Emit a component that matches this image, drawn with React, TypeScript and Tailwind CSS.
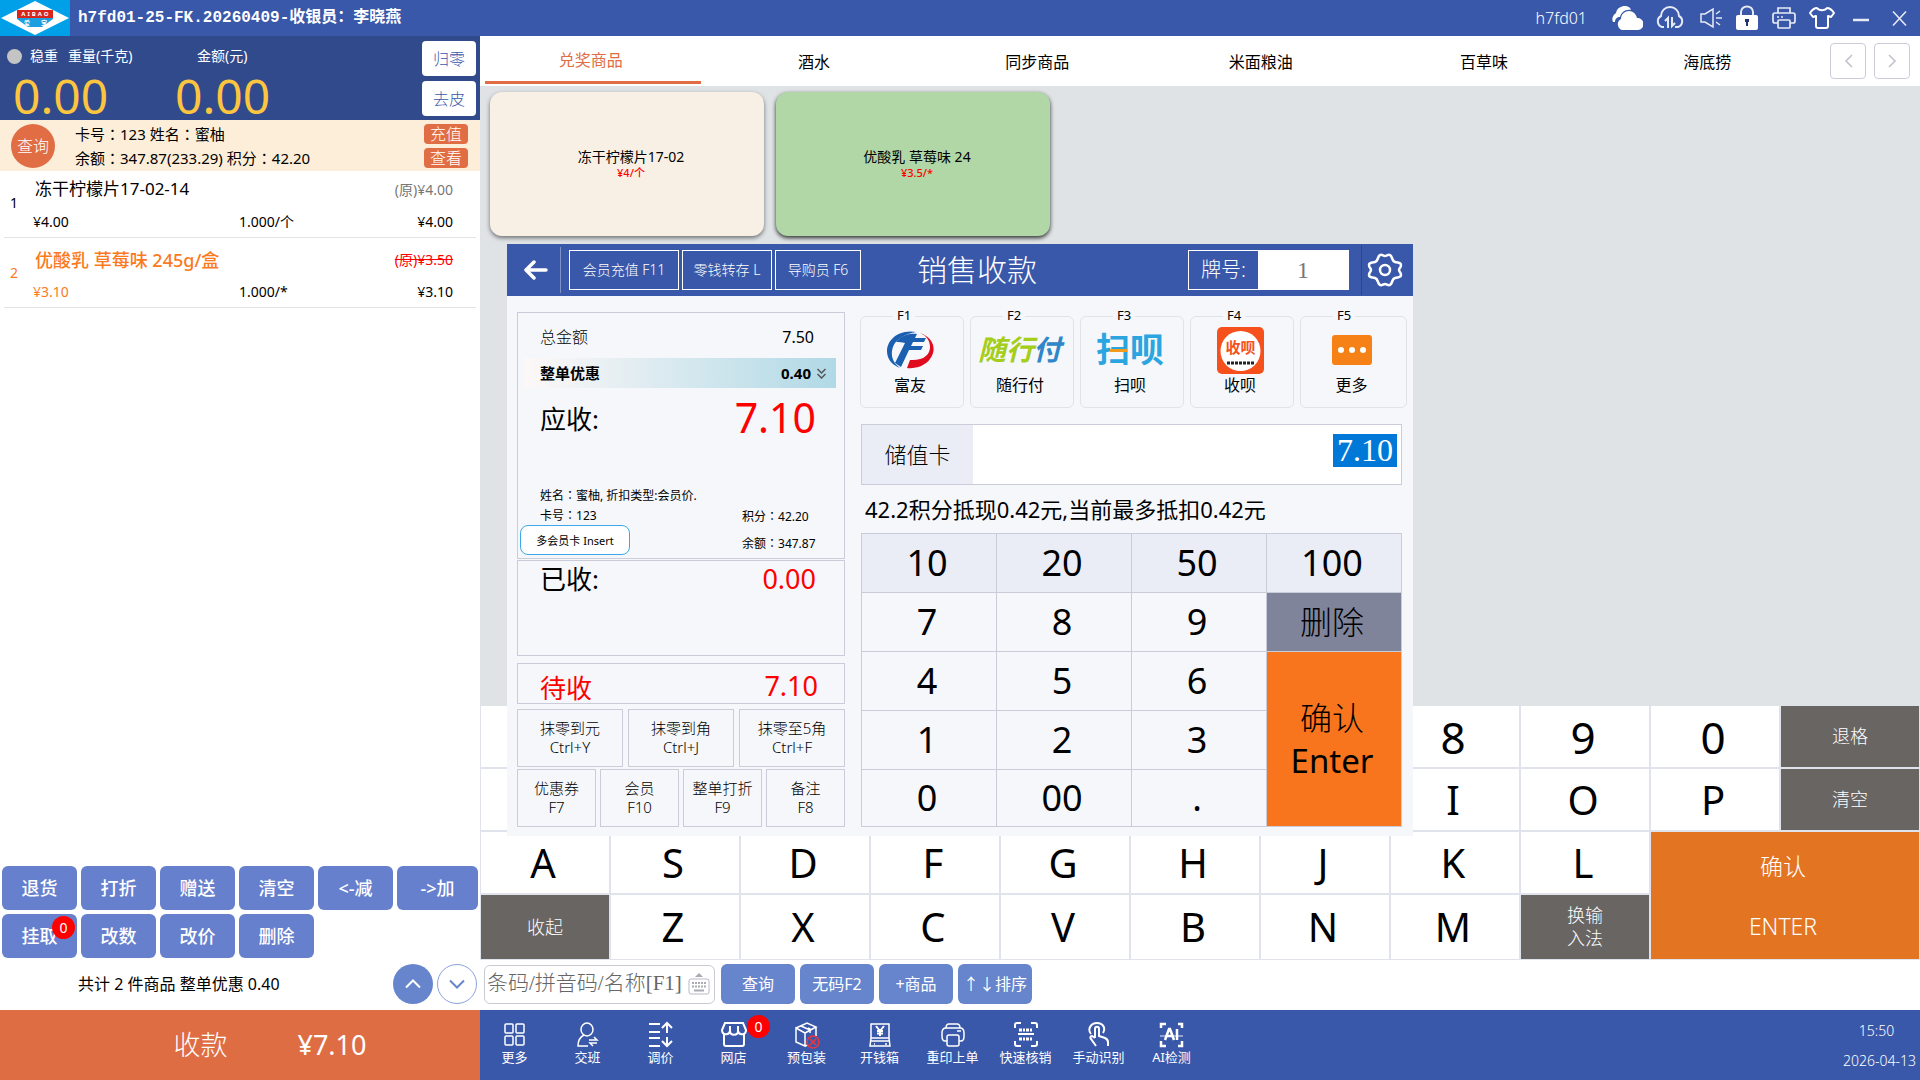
import React from 'react';

interface CartItem {
    id: number;
    name: string;
    price: string;
    original: string;
    qty: string;
    total: string;
    active?: boolean;
}

const cart: CartItem[] = [
    { id: 1, name: '冻干柠檬片17-02-14', price: '¥4.00', original: '(原)¥4.00', qty: '1.000/个', total: '¥4.00' },
    { id: 2, name: '优酸乳 草莓味 245g/盒', price: '¥3.10', original: '(原)¥3.50', qty: '1.000/*', total: '¥3.10', active: true },
];

const tabs = ['兑奖商品', '酒水', '同步商品', '米面粮油', '百草味', '海底捞'];

const keyRows = [
    ['1', '2', '3', '4', '5', '6', '7', '8', '9', '0'],
    ['Q', 'W', 'E', 'R', 'T', 'Y', 'U', 'I', 'O', 'P'],
    ['A', 'S', 'D', 'F', 'G', 'H', 'J', 'K', 'L'],
    ['Z', 'X', 'C', 'V', 'B', 'N', 'M'],
];

// keys that lie under the checkout dialog while it is open
const coveredKeys = '1234567QWERTYU';

// full-width colon, centred in its cell
const Colon = () => <span className="font-['Noto_Sans_CJK_TC',sans-serif]">：</span>;

/* ---------- title bar ---------- */

const Logo = () => (
    <svg width="70" height="36" viewBox="0 0 70 36" className="shrink-0">
        <rect width="70" height="36" fill="#00a0e9" />
        <path d="M1 18 35 1l34 17-34 17z" fill="#fff" />
        <rect x="17" y="10" width="36" height="8" fill="#d7261e" />
        <path d="M17 18h36v1L42 27H28L17 19z" fill="#1a9fe0" />
        <text x="36" y="16" textAnchor="middle" fontSize="6" fontWeight="bold" letterSpacing="2" fill="#fff">AIBAO</text>
        <text x="27" y="25" textAnchor="middle" fontSize="6" fontWeight="bold" fill="#fff">爱</text>
        <text x="44" y="25" textAnchor="middle" fontSize="6" fontWeight="bold" fill="#fff">宝</text>
    </svg>
);

const TitleBar = () => (
    <header className="flex h-9 items-center bg-[#3a58aa] text-white">
        <Logo />
        <h1 className="ml-2 grow font-['Liberation_Mono','Noto_Sans_CJK_SC',monospace] text-base font-bold">h7fd01-25-FK.20260409-收银员：李晓燕</h1>
        <span className="mr-6 text-base font-light">h7fd01</span>
        <div className="flex items-center pr-3">
            <button aria-label="云端" className="mr-3">
                <svg width="32" height="26" viewBox="0 0 32 26" fill="#fff">
                    <path d="M2 17a7 7 0 0 1 3-9C6 3 10 1 14 1c3 0 5 1 6 4-6-1-10 3-11 7-3 0-5 2-5 5z" />
                    <path d="M11 25a6 6 0 0 1-1-11c0-5 4-8 8-8s7 3 8 7a6 6 0 0 1 1 12z" />
                </svg>
            </button>
            <button aria-label="同步" className="mr-3.5">
                <svg width="30" height="24" viewBox="0 0 30 24" fill="none" stroke="#e6eaf5" strokeWidth="2">
                    <path d="M9 21H7A6 6 0 0 1 6 10a9 9 0 0 1 18 0 6 6 0 0 1-1 11h-3" />
                    <path d="M10 15l3-3v10M20 17l-3 3V11" />
                </svg>
            </button>
            <button aria-label="声音" className="mr-3">
                <svg width="24" height="22" viewBox="0 0 24 22" fill="none" stroke="#e6eaf5" strokeWidth="1.500">
                    <path d="M2 7h4l8-5v18l-8-5H2zM17 11h6M17 7l4-3M17 15l4 3" />
                </svg>
            </button>
            <button aria-label="锁屏" className="mr-3">
                <svg width="24" height="26" viewBox="0 0 24 26">
                    <path d="M6 11V7a6 5.500 0 0 1 12 0v4" fill="none" stroke="#e6eaf5" strokeWidth="2" />
                    <rect x="1" y="10" width="22" height="15" rx="2" fill="#fff" />
                    <path d="M10 14h4v3h-1v4h-2v-4h-1z" fill="#1f3670" />
                </svg>
            </button>
            <button aria-label="打印" className="mr-3">
                <svg width="26" height="24" viewBox="0 0 26 24" fill="none" stroke="#e6eaf5" strokeWidth="1.700">
                    <path d="M7 7V2h12v5M7 17H4a2 2 0 0 1-2-2V9a2 2 0 0 1 2-2h18a2 2 0 0 1 2 2v6a2 2 0 0 1-2 2h-3" />
                    <rect x="7" y="14" width="12" height="8" rx="1" />
                    <path d="M6 11h2M10 11h2" />
                </svg>
            </button>
            <button aria-label="换肤" className="mr-4">
                <svg width="26" height="24" viewBox="0 0 26 24" fill="none" stroke="#fff" strokeWidth="2" strokeLinejoin="round">
                    <path d="M8 2c2 3 8 3 10 0 3 0 5 2 7 5l-3 4-3-1v10a2 2 0 0 1-2 2H9a2 2 0 0 1-2-2V10l-3 1-3-4c2-3 4-5 7-5z" />
                </svg>
            </button>
            <button aria-label="最小化" className="mr-5">
                <svg width="20" height="24" viewBox="0 0 20 24" stroke="#e6eaf5" strokeWidth="2.500"><path d="M2 14h16" /></svg>
            </button>
            <button aria-label="关闭">
                <svg width="17" height="24" viewBox="0 0 17 24" stroke="#e6eaf5" strokeWidth="1.600"><path d="M2 5.500l13 14M15 5.500l-13 14" /></svg>
            </button>
        </div>
    </header>
);

/* ---------- left column ---------- */

const ScalePanel = () => (
    <section className="flex h-[84px] items-stretch justify-between bg-[#314a8c] pr-1 text-white">
        <div className="flex">
            <div className="flex w-[175px] flex-col pl-[7px]">
                <p className="mt-1 flex h-8 items-center text-sm">
                    <span className="mr-2 h-[15px] w-[15px] rounded-full bg-[#c4c4c4]"></span>
                    稳重<span className="ml-2.5">重量(千克)</span>
                </p>
                <p className="pl-1.5 text-5xl leading-[48px] text-[#fcc53f]">0.00</p>
            </div>
            <div className="flex flex-col">
                <p className="mt-1 flex h-8 items-center pl-[22px] text-sm">金额(元)</p>
                <p className="text-5xl leading-[48px] text-[#fcc53f]">0.00</p>
            </div>
        </div>
        <div className="flex flex-col gap-[5px] pt-[5px]">
            <button className="h-[35px] w-[54px] rounded bg-white text-base font-light text-[#3a58aa]">归零</button>
            <button className="h-[35px] w-[54px] rounded bg-white text-base font-light text-[#3a58aa]">去皮</button>
        </div>
    </section>
);

const MemberBar = () => (
    <section className="flex h-[51px] items-center bg-[#fdeed9] pr-3 pl-[11px] text-[15px]">
        <button className="h-11 w-11 rounded-full bg-[#e06d43] text-base font-light text-white">查询</button>
        <div className="ml-5 grow leading-6">
            <p>卡号<Colon />123 姓名<Colon />蜜柚</p>
            <p>余额<Colon />347.87(233.29) 积分<Colon />42.20</p>
        </div>
        <div className="flex flex-col gap-1">
            <button className="h-5 w-11 rounded bg-[#e06d43] text-base leading-5 font-light text-white">充值</button>
            <button className="h-5 w-11 rounded bg-[#e06d43] text-base leading-5 font-light text-white">查看</button>
        </div>
    </section>
);

const CartRow: React.FC<{ item: CartItem }> = ({ item }) => (
    <li className={`mx-1 flex h-[70px] items-center border-b border-[#e4e4e4] pr-[23px] pl-1.5 text-sm ${item.active ? 'text-[#fb7a1e]' : 'text-black'}`}>
        <span className="w-[23px] shrink-0">{item.id}</span>
        <div className="grow pt-1.5">
            <div className="flex h-8 items-center justify-between">
                <span className={item.active ? 'pl-0.5 text-lg font-medium' : 'pl-0.5 text-[17px]'}>{item.name}</span>
                <span className={item.active ? 'text-[#f00] line-through' : 'text-[#777]'}>{item.original}</span>
            </div>
            <div className="flex h-8 items-center">
                <span className="w-[206px]">{item.price}</span>
                <span className="grow text-black">{item.qty}</span>
                <span className="text-black">{item.total}</span>
            </div>
        </div>
    </li>
);

const actionButton = 'relative h-11 rounded-md bg-[#6680cd] text-lg font-medium text-white';

const LeftColumn = () => (
    <aside className="flex w-1/4 shrink-0 flex-col bg-white">
        <ScalePanel />
        <MemberBar />
        <ul className="-mt-[3px] grow">
            {cart.map((item) => <CartRow key={item.id} item={item} />)}
        </ul>
        <div className="grid grid-cols-[repeat(5,75fr)_81fr] gap-1 px-0.5">
            {['退货', '打折', '赠送', '清空', '<-减', '->加', '挂取', '改数', '改价', '删除'].map((label) => (
                <button key={label} className={actionButton}>
                    {label}
                    {label === '挂取' && (
                        <span className="absolute top-0.5 right-0.5 flex h-[23px] w-[23px] items-center justify-center rounded-full bg-[#f00] text-sm font-normal">0</span>
                    )}
                </button>
            ))}
        </div>
        <div className="flex h-[52px] items-center gap-1 pr-[3px] pl-[78px]">
            <p className="grow text-base">共计 2 件商品 整单优惠 0.40</p>
            <button aria-label="上一页" className="flex h-10 w-10 items-center justify-center rounded-full bg-[#6785cc]">
                <svg width="16" height="10" viewBox="0 0 16 10" fill="none" stroke="#fff" strokeWidth="2"><path d="M1 8.500l7-7 7 7" /></svg>
            </button>
            <button aria-label="下一页" className="flex h-10 w-10 items-center justify-center rounded-full border border-[#8ba2da]">
                <svg width="16" height="10" viewBox="0 0 16 10" fill="none" stroke="#6785cc" strokeWidth="2"><path d="M1 1.500l7 7 7-7" /></svg>
            </button>
        </div>
        <button className="flex h-[70px] items-center justify-center bg-[#df6d43] pl-[60px] text-[27px] text-white">
            <span className="mr-[70px] font-light">收款</span>
            <span>¥7.10</span>
        </button>
    </aside>
);

/* ---------- goods ---------- */

const Tabs = () => (
    <nav className="flex h-[50px] items-center bg-white pr-2.5">
        <div className="flex h-full grow">
            {tabs.map((tab, i) => (
                <button key={tab} className={`relative h-full flex-1 pr-0.5 text-base ${i === 0 ? 'pb-0.5 text-[#e06d43]' : 'pt-0.5 text-black'}`}>
                    {tab}
                    {i === 0 && <span className="absolute right-0.5 bottom-0.5 left-[5px] h-[3px] bg-[#e06d43]"></span>}
                </button>
            ))}
        </div>
        <div className="ml-2.5 flex gap-2">
            <button aria-label="向左" className="flex h-9 w-9 items-center justify-center rounded border border-[#cbccd9]">
                <svg width="9" height="14" viewBox="0 0 9 14" fill="none" stroke="#c3c4d0" strokeWidth="1.700"><path d="M8 1L2 7l6 6" /></svg>
            </button>
            <button aria-label="向右" className="flex h-9 w-9 items-center justify-center rounded border border-[#cbccd9]">
                <svg width="9" height="14" viewBox="0 0 9 14" fill="none" stroke="#c3c4d0" strokeWidth="1.700"><path d="M1 1l6 6-6 6" /></svg>
            </button>
        </div>
    </nav>
);

const Goods = () => (
    <section className="flex grow items-start gap-3 bg-[#dfe3e6] px-2.5 py-1.5">
        <button className="flex h-36 w-[274px] flex-col items-center justify-center rounded-xl bg-[#f8f0e5] pl-2 shadow-[0_2px_4px_rgba(0,0,0,0.5)]">
            <span className="text-sm leading-[17px]">冻干柠檬片17-02</span>
            <span className="text-[11px] leading-[15px] font-medium text-[#f00]">¥4/个</span>
        </button>
        <button className="flex h-36 w-[274px] flex-col items-center justify-center rounded-xl bg-[#b0d7a5] pl-2 shadow-[0_2px_4px_rgba(0,0,0,0.8)]">
            <span className="text-sm leading-[17px]">优酸乳 草莓味 24</span>
            <span className="text-[11px] leading-[15px] font-medium text-[#f00]">¥3.5/*</span>
        </button>
    </section>
);

/* ---------- keyboard ---------- */

const darkKey = 'bg-[#696563] text-lg font-light leading-[23px] text-white';

const CharKey: React.FC<{ char: string }> = ({ char }) => (
    <button className={`bg-white pr-1 leading-none ${/\d/.test(char) ? 'text-[44px]' : 'text-[40px]'}`}>
        <span className={coveredKeys.includes(char) ? 'invisible' : ''}>{char}</span>
    </button>
);

const Keyboard = () => (
    <section className="grid grid-cols-[repeat(10,128fr)_138fr] grid-rows-[61px_61px_61px_64px] gap-0.5 border-r border-b border-l border-[#e1e3ec] bg-[#e1e3ec]">
        {keyRows[0].map((k) => <CharKey key={k} char={k} />)}
        <button className={darkKey}>退格</button>
        {keyRows[1].map((k) => <CharKey key={k} char={k} />)}
        <button className={darkKey}>清空</button>
        {keyRows[2].map((k) => <CharKey key={k} char={k} />)}
        <button className="col-span-2 row-span-2 bg-[#e37422] pr-1 text-[23px] leading-[60px] font-light text-white">
            确认<br />ENTER
        </button>
        <button className={darkKey}>收起</button>
        {keyRows[3].map((k) => <CharKey key={k} char={k} />)}
        <button className={darkKey}>换输<br />入法</button>
    </section>
);

const SearchRow = () => (
    <div className="flex h-[50px] items-center gap-[5px] bg-white pb-0.5 pl-1">
        <label className="mr-px flex h-[39px] w-[231px] items-center rounded-md border border-[#c9cad3] pr-1 pl-0.5">
            <input aria-label="商品搜索" placeholder="条码/拼音码/名称[F1]" className="w-0 grow font-['Liberation_Serif','Noto_Sans_CJK_SC',serif] text-[21px] font-light outline-none placeholder:text-[#666]" />
            <svg width="22" height="22" viewBox="0 0 22 22" className="ml-px shrink-0">
                <path d="M7 4l4-4 4 4z" fill="#a9aab4" />
                <rect x="1" y="6" width="20" height="15" rx="2" fill="#fff" stroke="#b9bac4" />
                <path d="M4 10h14M4 13.500h14" stroke="#a9aab4" strokeWidth="2" strokeDasharray="2 1" />
                <path d="M6 17.500h10" stroke="#a9aab4" strokeWidth="2" />
            </svg>
        </label>
        {['查询', '无码F2', '+商品', '↑↓排序'].map((label) => (
            <button key={label} className="h-10 w-[74px] rounded-md bg-[#6785cc] text-base whitespace-nowrap text-white">{label}</button>
        ))}
    </div>
);

/* ---------- footer tools ---------- */

const toolIcons: { label: string; badge?: string; icon: React.ReactNode }[] = [
    {
        label: '更多',
        icon: <><rect x="4" y="3" width="8" height="9" rx="1" /><rect x="15" y="3" width="8" height="9" rx="1" /><rect x="4" y="15" width="8" height="9" rx="1" /><rect x="15" y="15" width="8" height="9" rx="1" /></>,
    },
    {
        label: '交班',
        icon: <><ellipse cx="13" cy="8.500" rx="6" ry="6.500" /><path d="M10 14c-4 2-6 6-6 11h10M15 19h8l-3-3M23 22h-7l3 3" /></>,
    },
    {
        label: '调价',
        icon: <><path d="M2 3h11M2 11h11M2 17h11M2 25h11" strokeWidth="2" /><path d="M20 12V3M15 7l5-5 5 5M20 16v9M15 20l5 5 5-5" strokeWidth="2" /></>,
    },
    {
        label: '网店',
        badge: '0',
        icon: <><path d="M5 2h18l3 7c0 5-7 6-8 1 0 5-8 5-8 0-1 5-8 4-8-1zM4 13v10a2 2 0 0 0 2 2h16a2 2 0 0 0 2-2V13M10 5v5M18 5v5" strokeWidth="2" /></>,
    },
    {
        label: '预包装',
        icon: <><path d="M3 7l9 5v13l-9-4zM3 7l11-5 9 4-11 6M23 6v9M8 5l9 4M12 25l3-1" /><path d="M15 7l2 1v4" /><g stroke="#f0343a"><circle cx="20" cy="21" r="6" /><path d="M17 18l6 6M23 18l-6 6" /></g></>,
    },
    {
        label: '开钱箱',
        icon: <><path d="M5 3h18v14H5zM5 17l-1 8h20l-1-8M4 20h20" /><path d="M8 23h1M19 23h2" /><path d="M10 5l4 5 4-5M14 10v5M11 10h6M11 12.500h6" strokeWidth="2" /></>,
    },
    {
        label: '重印上单',
        icon: <><path d="M7 7c0-3 1-4 3-4h8c2 0 3 1 3 4" /><path d="M8 20H6c-2 0-3-2-3-5v-3c0-3 1-5 4-5h14c3 0 4 2 4 5v3c0 3-1 5-3 5h-2" /><rect x="8" y="14" width="12" height="11" rx="2" /><path d="M18 10h4" /></>,
    },
    {
        label: '快速核销',
        icon: <><path d="M3 7V4c0-1 1-2 2-2h4M19 2h4c1 0 2 1 2 2v3M3 20v3c0 1 1 2 2 2h4M19 25h4c1 0 2-1 2-2v-3" strokeWidth="2" /><path d="M6 13h16" strokeWidth="2" /><path d="M7 9h14M7 18h14" strokeWidth="3" strokeDasharray="3 1 2 1" /></>,
    },
    {
        label: '手动识别',
        icon: <><path d="M6 13c-4-5 0-11 6-11s9 5 6 10M10 17V8c0-3 4-3 4 0v7l6 2c2 1 3 2 3 4v4M10 17l-3-2c-2 0-2 2-1 3l5 7" strokeWidth="2" /></>,
    },
    {
        label: 'AI检测',
        icon: <><path d="M3 7V3h5M20 3h4v4M3 20v5h5M20 25h4v-5" strokeWidth="2.500" /><path d="M2 15h23" opacity="0.6" /><path d="M7 19l4-11h1l4 11M9 15h6M19 8v11" strokeWidth="2.500" /></>,
    },
];

const FooterTools = () => (
    <footer className="flex h-[70px] items-start justify-between bg-[#3a58aa] pr-1 text-white">
        <div className="-ml-px flex">
            {toolIcons.map((tool) => (
                <button key={tool.label} className="relative flex w-[73px] flex-col items-center pt-[11px] pr-0.5 text-[13px] leading-[17px] whitespace-nowrap">
                    <svg width="28" height="28" viewBox="0 0 28 28" fill="none" stroke="#fff" strokeWidth="1.500" aria-hidden="true">{tool.icon}</svg>
                    {tool.label}
                    {tool.badge && (
                        <span className="absolute top-[5px] right-px flex h-[23px] w-[23px] items-center justify-center rounded-full bg-[#f00] text-sm">{tool.badge}</span>
                    )}
                </button>
            ))}
        </div>
        <div className="pt-1.5 text-center text-sm leading-[30px] font-light">
            <p className="pr-1.5">15:50</p>
            <p>2026-04-13</p>
        </div>
    </footer>
);

/* ---------- checkout dialog ---------- */

const FuyouLogo = () => (
    <svg width="48" height="38" viewBox="0 0 48 38">
        <path d="M30 1C14-2 1 8 1 20c0 8 5 14 13 17-5-4-9-9-8-17C7 10 17 3 30 1z" fill="#1b5fb0" />
        <path d="M34 2c14 5 17 17 10 26-5 7-15 10-23 9l3-8c13 1 20-5 20-13 0-6-3-11-10-14z" fill="#e10b1e" />
        <path d="M10 11C15 4 24 2 31 3l-2 4h11l-2 4H27l-2 4h12l-2 4H23l-8 17-6-4L19 12c-3-1-6-1-9-1z" fill="#1b5fb0" />
    </svg>
);

const SuixingLogo = () => (
    <svg width="84" height="34" viewBox="0 0 84 34" overflow="visible" fontSize="28" fontWeight="bold" fontStyle="italic">
        <text x="0" y="27" fill="#a5cd1b">随行</text>
        <text x="55" y="27" fill="#2f86c8">付</text>
    </svg>
);

const SaobeiLogo = () => (
    <svg width="68" height="36" viewBox="0 0 68 36" overflow="visible" fontSize="34" fontWeight="bold">
        <text x="0" y="30" fill="#2aa5e0">扫呗</text>
        <rect x="14" y="17" width="17" height="3" fill="#f39a1d" />
    </svg>
);

const ShoubeiLogo = () => (
    <svg width="47" height="47" viewBox="0 0 47 47">
        <rect width="47" height="47" rx="5" fill="#f6511d" />
        <circle cx="23.500" cy="24" r="20" fill="#fff" />
        <text x="23.500" y="26" textAnchor="middle" fontSize="15" fontWeight="bold" fill="#f6511d">收呗</text>
        <path d="M10 36h28" stroke="#222" strokeWidth="3" strokeDasharray="3 1" />
    </svg>
);

const MoreLogo = () => (
    <svg width="40" height="30" viewBox="0 0 40 30">
        <rect width="40" height="30" rx="3" fill="#f68217" />
        <g fill="#fff"><circle cx="9" cy="15" r="3" /><circle cx="20" cy="15" r="3" /><circle cx="31" cy="15" r="3" /></g>
    </svg>
);

const payMethods = [
    { hotkey: 'F1', name: '富友', logo: <FuyouLogo /> },
    { hotkey: 'F2', name: '随行付', logo: <SuixingLogo /> },
    { hotkey: 'F3', name: '扫呗', logo: <SaobeiLogo /> },
    { hotkey: 'F4', name: '收呗', logo: <ShoubeiLogo /> },
    { hotkey: 'F5', name: '更多', logo: <MoreLogo /> },
];

const DialogHeader = () => (
    <header className="flex h-[52px] items-center bg-[#3a58aa] text-white">
        <button aria-label="返回" className="flex h-[46px] w-[54px] items-center justify-center border-r border-[#7f92c8] pl-1">
            <svg width="24" height="20" viewBox="0 0 24 20" fill="none" stroke="#fff" strokeWidth="3.500" strokeLinecap="round" strokeLinejoin="round">
                <path d="M10 2L2 10l8 8M2 10h20" />
            </svg>
        </button>
        <div className="ml-2 flex gap-[3px] text-sm font-light">
            <button className="h-10 w-[110px] border border-white">会员充值 F11</button>
            <button className="h-10 w-[90px] border border-white">零钱转存 L</button>
            <button className="h-10 w-[86px] border border-white">导购员 F6</button>
        </div>
        <h2 className="grow pl-14 text-3xl font-light">销售收款</h2>
        <div className="flex h-10 w-[161px] items-center border border-white">
            <label htmlFor="tag-no" className="grow text-center text-xl font-light">牌号:</label>
            <input id="tag-no" defaultValue="1" className="h-full w-[90px] bg-white text-center font-['Liberation_Serif',serif] text-2xl text-[#777] outline-none" />
        </div>
        <button aria-label="设置" className="ml-3 flex h-[50px] w-[52px] items-center justify-center border-l border-[#2d4688] pr-1.5">
            <svg width="36" height="36" viewBox="0 0 36 36" fill="none" stroke="#fff" strokeWidth="2.500" strokeLinejoin="round">
                <path d="M12 4c2-3 4 0 6 0s4-3 6 0 1 5 4 6 6 0 6 3-2 3-2 5 2 2 2 5-3 2-6 3-2 3-4 6-4 0-6 0-4 3-6 0-1-5-4-6-6 0-6-3 2-3 2-5-2-2-2-5 3-2 6-3 2-3 4-6z" />
                <circle cx="18" cy="18" r="5" />
            </svg>
        </button>
    </header>
);

const box = 'border border-[#caccda]';
const smallButton = 'flex-1 border border-[#caccda] text-[15px] leading-[19px] font-light';

const Summary = () => (
    <div className="flex w-[328px] flex-col">
        <div className={`flex h-[247px] flex-col ${box}`}>
            <p className="flex h-[45px] items-center justify-between pt-0.5 pr-[30px] pl-[22px] text-base"><span className="font-light">总金额</span><span>7.50</span></p>
            <button className="mr-2 ml-1.5 flex h-[30px] items-center justify-between bg-linear-to-r from-[#fdf8f8] to-[#b0d9e6] pr-2.5 pl-4 text-[15px] font-bold">
                <span>整单优惠</span>
                <span className="flex items-center gap-1.5">
                    0.40
                    <svg width="9" height="11" viewBox="0 0 9 11" fill="none" stroke="#555" strokeWidth="1.500"><path d="M0.500 1l4 4 4-4M0.500 6l4 4 4-4" /></svg>
                </span>
            </button>
            <p className="flex h-[58px] items-center justify-between pr-7 pl-[22px] text-[26px]"><span className="pt-1">应收:</span><span className="text-[41px] leading-none text-[#f00]">7.10</span></p>
            <div className="mt-auto flex items-end justify-between pr-6 pb-[3px] pl-0.5 text-xs leading-[19px]">
                <div>
                    <p className="pl-5">姓名<Colon />蜜柚, 折扣类型:会员价.</p>
                    <p className="pl-5">卡号<Colon />123</p>
                    <button className="h-[30px] w-[110px] rounded-lg border border-[#3ba9e9] bg-white text-[11px]">多会员卡 Insert</button>
                </div>
                <div className="w-[78px] pb-0.5 whitespace-nowrap">
                    <p>积分<Colon />42.20</p>
                    <p className="pt-[7px]">余额<Colon />347.87</p>
                </div>
            </div>
        </div>
        <p className={`mt-px flex h-24 items-start justify-between pr-7 pl-[22px] text-[26px] leading-9 ${box}`}><span>已收:</span><span className="text-[27px] text-[#f00]">0.00</span></p>
        <p className={`mt-[7px] flex h-[41px] items-center justify-between pt-1 pr-[26px] pl-[22px] text-[26px] leading-9 text-[#f00] ${box}`}><span className="pt-1">待收</span><span className="text-[27px]">7.10</span></p>
        <div className="mt-[5px] flex h-[58px] gap-[5px]">
            <button className={smallButton}>抹零到元<br />Ctrl+Y</button>
            <button className={smallButton}>抹零到角<br />Ctrl+J</button>
            <button className={smallButton}>抹零至5角<br />Ctrl+F</button>
        </div>
        <div className="mt-0.5 flex h-[58px] gap-1">
            <button className={smallButton}>优惠券<br />F7</button>
            <button className={smallButton}>会员<br />F10</button>
            <button className={smallButton}>整单打折<br />F9</button>
            <button className={smallButton}>备注<br />F8</button>
        </div>
    </div>
);

const padKey = 'flex items-center justify-center border-r border-b border-[#caccda] pr-1 text-4xl leading-none';

const NumPad = () => (
    <div className="grid grid-cols-4 grid-rows-[59px_59px_59px_59px_57px] border-t border-l border-[#caccda]">
        {['10', '20', '50', '100'].map((k) => <button key={k} className={`bg-[#eaedf6] ${padKey}`}>{k}</button>)}
        {['7', '8', '9'].map((k) => <button key={k} className={padKey}>{k}</button>)}
        <button className="border-r border-b border-[#caccda] bg-[#80849a] pr-1 text-[32px] font-light">删除</button>
        {['4', '5', '6'].map((k) => <button key={k} className={padKey}>{k}</button>)}
        <button className="row-span-3 border-r border-b border-[#caccda] bg-[#f8751d] pr-1 text-[32px] leading-[43px] font-light">确认<br /><span className="text-[33px] font-normal">Enter</span></button>
        {['1', '2', '3', '0', '00', '.'].map((k) => <button key={k} className={padKey}>{k}</button>)}
    </div>
);

const Payment = () => (
    <div className="flex grow flex-col">
        <div className="-mr-[5px] -ml-px grid grid-cols-[repeat(4,104fr)_107fr] gap-1.5">
            {payMethods.map((m) => (
                <button key={m.hotkey} className="relative flex h-[92px] flex-col items-center justify-end rounded-md border border-[#e2e3e6] pr-1 pb-3 text-base leading-5">
                    <span className="absolute -top-3 left-8 bg-[#f5f7fb] px-1 text-[13px] leading-5">{m.hotkey}</span>
                    <span className="flex h-[50px] items-center">{m.logo}</span>
                    {m.name}
                </button>
            ))}
        </div>
        <div className="mt-4 flex h-[61px] items-stretch border border-[#caccda] bg-white">
            <label htmlFor="stored-card" className="flex w-[111px] items-center justify-center bg-[#eaedf6] text-[22px] font-light">储值卡</label>
            <div className="flex grow justify-end pt-[9px] pr-1">
                <input id="stored-card" defaultValue="7.10" className="h-[33px] w-16 bg-[#0078d7] text-center font-['Liberation_Serif',serif] text-[32px] leading-[33px] text-white outline-none" />
            </div>
        </div>
        <p className="flex h-12 items-center pl-1 text-[22px]">42.2积分抵现0.42元,当前最多抵扣0.42元</p>
        <NumPad />
    </div>
);

const CheckoutDialog = () => (
    <div className="fixed inset-0 flex items-center justify-center">
        <div role="dialog" aria-label="销售收款" className="w-[906px] bg-[#f5f7fb]">
            <DialogHeader />
            <div className="flex gap-4 pt-4 pr-[11px] pb-[9px] pl-2.5">
                <Summary />
                <div className="flex grow flex-col pt-1">
                    <Payment />
                </div>
            </div>
        </div>
    </div>
);

export default function App() {
    return (
        <div className="flex min-h-screen flex-col bg-white font-['Noto_Sans','Noto_Sans_CJK_SC',sans-serif] text-black">
            <TitleBar />
            <div className="flex grow">
                <LeftColumn />
                <main className="flex grow flex-col">
                    <Tabs />
                    <Goods />
                    <Keyboard />
                    <SearchRow />
                    <FooterTools />
                </main>
            </div>
            <CheckoutDialog />
        </div>
    );
}
